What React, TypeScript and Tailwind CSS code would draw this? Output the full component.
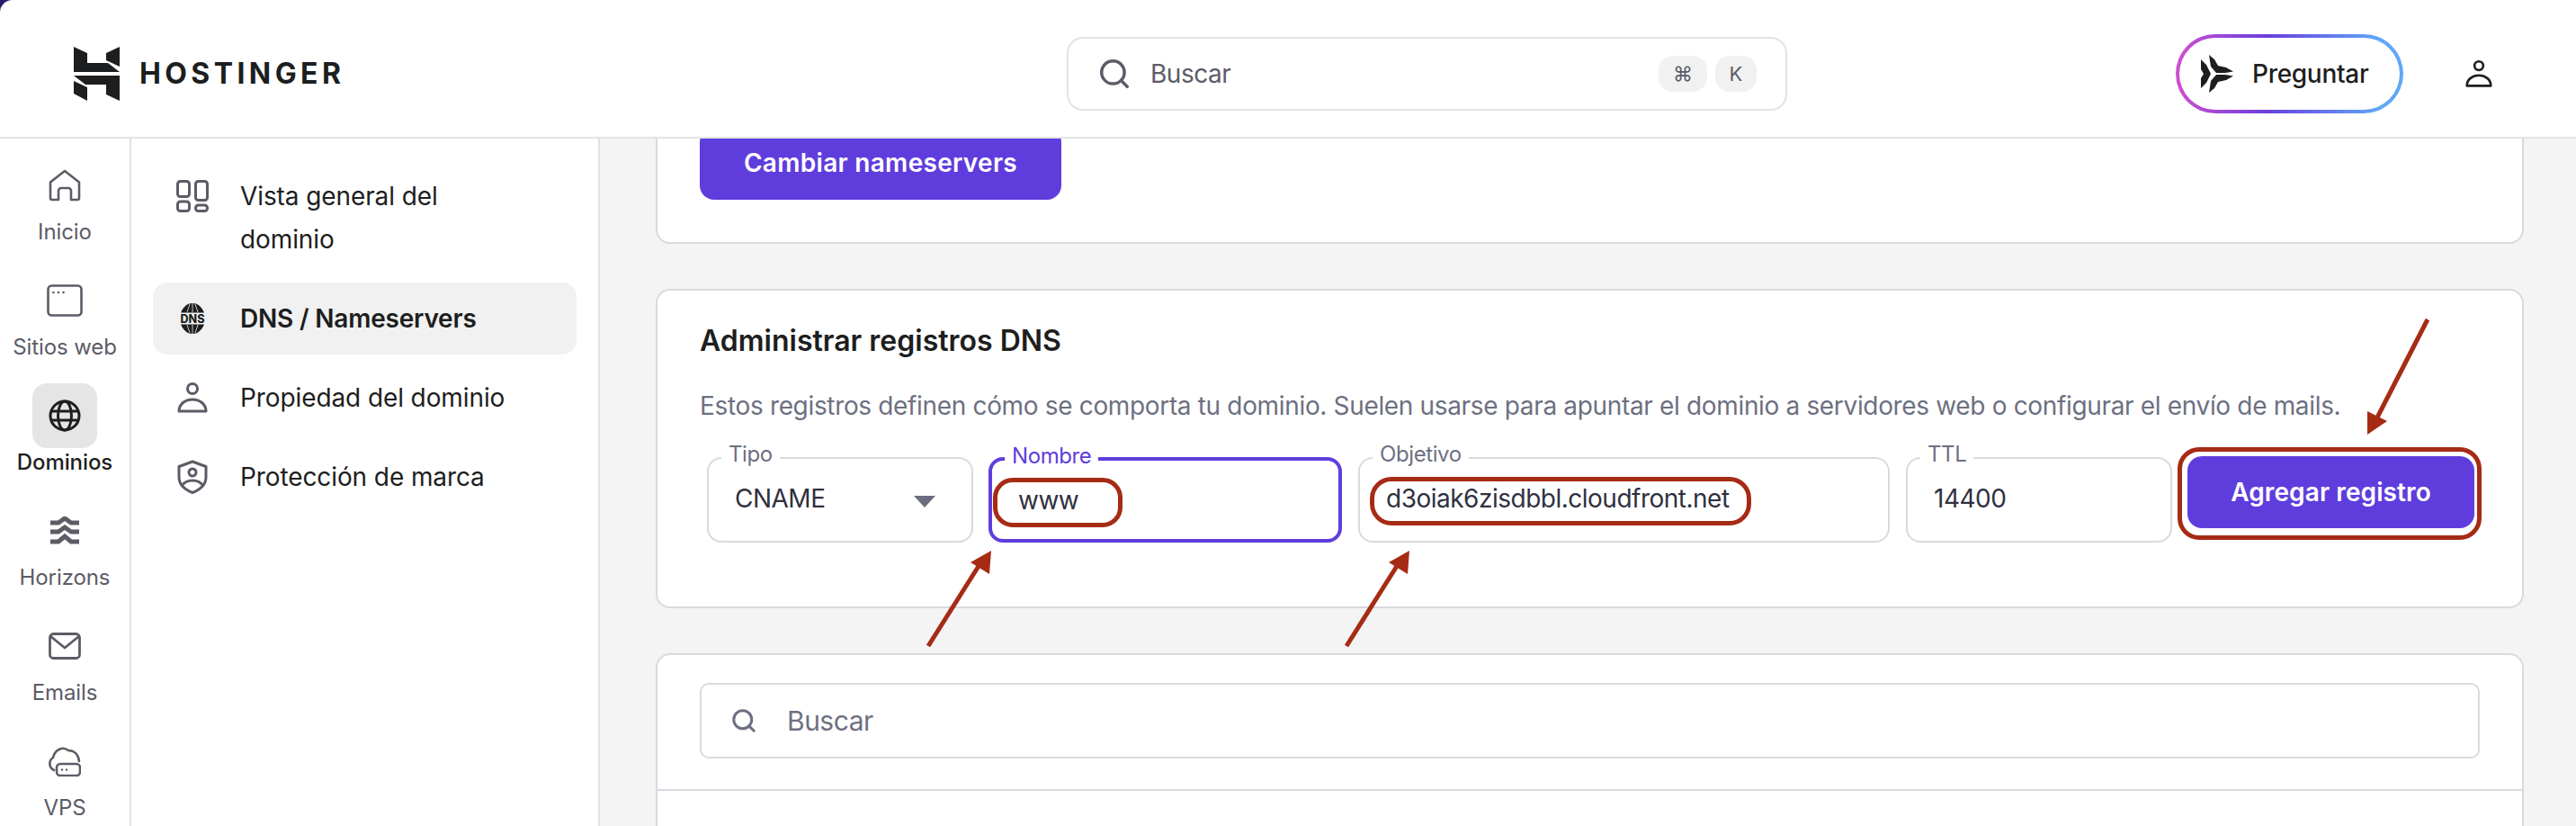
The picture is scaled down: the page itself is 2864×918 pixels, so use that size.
import { Search } from "lucide-react";

const HomeIcon = () => (
  <svg width="36" height="36" viewBox="0 0 36 36" fill="none" stroke="currentColor" strokeWidth="2.6" strokeLinejoin="round">
    <path d="M18 2L34 14.5V32a2 2 0 0 1-2 2h-7V24a3 3 0 0 0-3-3h-8a3 3 0 0 0-3 3v10H4a2 2 0 0 1-2-2V14.5Z" />
  </svg>
);

const WindowIcon = () => (
  <svg width="40" height="36" viewBox="0 0 40 36" fill="none" stroke="currentColor" strokeWidth="2.6">
    <rect x="1.5" y="1.5" width="37" height="33" rx="4" />
    <circle cx="7.5" cy="9" r="1.3" fill="currentColor" stroke="none" />
    <circle cx="13" cy="9" r="1.3" fill="currentColor" stroke="none" />
    <circle cx="18.5" cy="9" r="1.3" fill="currentColor" stroke="none" />
  </svg>
);

const GlobeIcon = () => (
  <svg width="36" height="36" viewBox="0 0 36 36" fill="none" stroke="currentColor" strokeWidth="3">
    <circle cx="18" cy="18" r="16" />
    <ellipse cx="18" cy="18" rx="7.5" ry="16" />
    <path d="M2 13H34M2 23H34" />
  </svg>
);

const HorizonsIcon = () => (
  <svg width="32" height="32" viewBox="0 0 32 32" fill="none" stroke="currentColor" strokeWidth="5">
    <path d="M0 7H9L16 2L23 7H32" />
    <path d="M0 17H9L16 12L23 17H32" />
    <path d="M0 28H9L16 22L23 28H32" />
  </svg>
);

const MailIcon = () => (
  <svg width="36" height="30" viewBox="0 0 36 30" fill="none" stroke="currentColor" strokeWidth="2.8" strokeLinejoin="round">
    <rect x="1.5" y="1.5" width="33" height="27" rx="4" />
    <path d="M2 4L18 17L34 4" />
  </svg>
);

const VpsIcon = () => (
  <svg width="36" height="34" viewBox="0 0 36 34" fill="none" stroke="currentColor" strokeWidth="2.6" strokeLinecap="round">
    <path d="M6 27C0 24 0 16 5 13C7 4 16 0 22 5C28 5 33 9 34 17" />
    <rect x="9" y="20" width="26" height="13" rx="4" />
    <circle cx="15" cy="26.5" r="1.2" fill="currentColor" stroke="none" />
    <circle cx="20" cy="26.5" r="1.2" fill="currentColor" stroke="none" />
  </svg>
);

const OverviewIcon = () => (
  <svg width="36" height="36" viewBox="0 0 36 36" fill="none" stroke="currentColor" strokeWidth="3">
    <rect x="1.5" y="1.5" width="13" height="17" rx="3" />
    <rect x="21.5" y="1.5" width="13" height="21" rx="3" />
    <rect x="1.5" y="24" width="13" height="10.5" rx="3" />
    <rect x="21.5" y="28" width="13" height="6.5" rx="3" />
  </svg>
);

const DnsIcon = () => (
  <svg width="36" height="36" viewBox="0 0 36 36">
    <path d="M5 11.500C8 4 13 1 18 1C23 1 28 4 31 11.500Z" fill="#1d1e20" />
    <path d="M5 24.500C8 32 13 35 18 35C23 35 28 32 31 24.500Z" fill="#1d1e20" />
    <path d="M12 11L15 2M18 11V1M24 11L21 2M12 25L15 34M18 25V35M24 25L21 34" stroke="#f1f1f1" strokeWidth="0.8" />
    <text x="18" y="22.500" textAnchor="middle" fontSize="12.500" fontWeight="800" fill="#1d1e20" fontFamily="Inter, sans-serif">
      DNS
    </text>
  </svg>
);

const UserIcon = ({ size = 36 }: { size?: number }) => (
  <svg width={size} height={size} viewBox="0 0 36 36" fill="none" stroke="currentColor" strokeWidth="3" strokeLinejoin="round">
    <circle cx="18" cy="8" r="5.500" />
    <path d="M3 33C3 25 10 20 18 20C26 20 33 25 33 33Z" />
  </svg>
);

const ShieldIcon = () => (
  <svg width="36" height="38" viewBox="0 0 36 38" fill="none" stroke="currentColor" strokeWidth="3" strokeLinejoin="round">
    <path d="M18 2L33 7.500V19C33 27 27 33 18 36.500C9 33 3 27 3 19V7.500Z" />
    <circle cx="18" cy="14" r="4" />
    <path d="M6 29C9 24.500 13 23 18 23C23 23 27 24.500 30 29" />
  </svg>
);

const LogoMark = () => (
  <svg width="51" height="60" viewBox="0 0 51 60" fill="#1d1e20">
    <path d="M0 0L15 7V18H38L51 28H0Z" />
    <path d="M36 7L51 0V22L36 15Z" />
    <path d="M51 60L36 53V42H13L0 32H51Z" />
    <path d="M0 38L15 45V60L0 52Z" />
  </svg>
);

const SparkIcon = () => (
  <svg width="36" height="42" viewBox="0 0 36 42" fill="#1d1e20">
    <path d="M0 5L6 11L11 21L6 31L0 37V26L3 21L0 16Z" />
    <path d="M9 0L15 5L19 12L28 14L36 18.500L27 20L17 20L11 13Z" />
    <path d="M9 42L15 37L19 30L28 28L36 23.500L27 22L17 22L11 29Z" />
  </svg>
);

const railItems = [
  { label: "Inicio", icon: <HomeIcon /> },
  { label: "Sitios web", icon: <WindowIcon /> },
  { label: "Dominios", icon: <GlobeIcon />, active: true },
  { label: "Horizons", icon: <HorizonsIcon /> },
  { label: "Emails", icon: <MailIcon /> },
  { label: "VPS", icon: <VpsIcon /> },
];

const domainMenu = [
  { label: "Vista general del dominio", icon: <OverviewIcon /> },
  { label: "DNS / Nameservers", icon: <DnsIcon />, active: true },
  { label: "Propiedad del dominio", icon: <UserIcon /> },
  { label: "Protección de marca", icon: <ShieldIcon /> },
];

const Field = ({
  label,
  value,
  className,
  focused,
  children,
}: {
  label: string;
  value: string;
  className: string;
  focused?: boolean;
  children?: React.ReactNode;
}) => (
  <div
    className={`relative h-[95px] shrink-0 rounded-[16px] bg-white ${className} ${
      focused ? "border-[4px] border-[#5f3ddd]" : "border-2 border-[#d8dae0]"
    }`}
  >
    <span
      className={`absolute -top-[21px] left-[14px] bg-white px-[8px] text-[24px] leading-[32px] tracking-[-0.4px] ${
        focused ? "text-[#5f3ddd]" : "text-[#6d7081]"
      }`}
    >
      {label}
    </span>
    <div className="flex h-full items-start pl-[29px] pt-[26px] text-[28px] leading-[36px] tracking-[-0.5px] text-[#2f3140]">
      {value}
    </div>
    {children}
  </div>
);

export default function App() {
  return (
    <div className="relative flex h-[918px] flex-col overflow-hidden bg-[#2a1a6e] [font-family:Inter,sans-serif] text-[#1d1e20]">
      {/* top bar */}
      <header className="z-10 flex h-[154px] shrink-0 items-center rounded-tl-[14px] border-b-2 border-[#e3e3e3] bg-white pl-[82px] pt-[12px]">
        <LogoMark />
        <span className="ml-[22px] w-[222px] text-[32px] font-bold leading-none tracking-[4.4px]">HOSTINGER</span>
        <div className="ml-[809px] flex h-[82px] w-[801px] items-center rounded-[18px] border-2 border-[#e3e3e3] pl-[32px] pr-[32px]">
          <Search size={38} strokeWidth={2.2} className="text-[#5b5c66]" />
          <span className="ml-[21px] text-[28px] tracking-[-0.5px] text-[#5b5c66]">Buscar</span>
          <span className="ml-auto flex h-[40px] w-[54px] items-center justify-center rounded-[16px] bg-[#f1f1f1] text-[22px] text-[#5b5c66]">⌘</span>
          <span className="ml-[9px] flex h-[40px] w-[46px] items-center justify-center rounded-[16px] bg-[#f1f1f1] text-[22px] text-[#5b5c66]">K</span>
        </div>
        <div className="ml-[432px] h-[88px] w-[253px] rounded-full bg-[linear-gradient(90deg,#d04fcf,#6a3fdc_40%,#5fa8f8_90%)] p-[4px]">
          <div className="flex h-full items-center rounded-full bg-white pl-[24px]">
            <SparkIcon />
            <span className="ml-[21px] text-[28px] font-medium tracking-[-0.3px]">Preguntar</span>
          </div>
        </div>
        <div className="ml-[68px]">
          <UserIcon size={32} />
        </div>
      </header>

      <div className="flex min-h-0 flex-1 bg-white">
        {/* icon rail */}
        <nav className="flex w-[146px] shrink-0 flex-col items-center gap-[24px] border-r-2 border-[#e3e3e3] pt-[16px]">
          {railItems.map((item) => (
            <div key={item.label} className="flex w-full shrink-0 flex-col items-center">
              <div
                className={`flex h-[72px] w-[72px] items-center justify-center rounded-[16px] ${
                  item.active ? "bg-[#e5e5e5] text-[#1d1e20]" : "text-[#5b5c66]"
                }`}
              >
                {item.icon}
              </div>
              <span
                className={`h-[32px] whitespace-nowrap text-[24px] leading-[32px] tracking-[-0.1px] ${
                  item.active ? "font-medium text-[#1d1e20]" : "text-[#5b5c66]"
                }`}
              >
                {item.label}
              </span>
            </div>
          ))}
        </nav>

        {/* domain menu */}
        <aside className="flex w-[521px] shrink-0 flex-col gap-[8px] border-r-2 border-[#e3e3e3] px-[24px] pt-[24px]">
          {domainMenu.map((item) => (
            <div
              key={item.label}
              className={`flex items-start gap-[35px] rounded-[16px] py-[16px] pl-[26px] ${item.active ? "bg-[#f1f1f1]" : ""}`}
            >
              <div className="flex h-[48px] w-[36px] shrink-0 items-center justify-center text-[#5b5c66]">{item.icon}</div>
              <span className={`max-w-[300px] text-[28px] leading-[48px] ${item.active ? "font-semibold tracking-[-0.2px]" : "tracking-[-0.1px]"}`}>
                {item.label}
              </span>
            </div>
          ))}
        </aside>

        {/* main content */}
        <main className="min-w-0 flex-1 bg-[#f4f4f5] pl-[62px] pr-[58px]">
          <section className="-mt-[40px] rounded-[16px] border-2 border-[#d8dae0] bg-white pb-[47px] pl-[47px] pt-[26px]">
            <button className="flex h-[80px] w-[402px] items-center justify-center rounded-[16px] bg-[#5f3ddd] pb-[3px] text-[28px] font-semibold tracking-[0.3px] text-white">
              Cambiar nameservers
            </button>
          </section>

          <section className="mt-[50px] h-[355px] rounded-[16px] border-2 border-[#d8dae0] bg-white pl-[47px] pt-[36px]">
            <h2 className="text-[32px] font-semibold leading-[40px] tracking-[0px]">Administrar registros DNS</h2>
            <p className="mt-[32px] whitespace-nowrap text-[28px] leading-[40px] tracking-[-0.34px] text-[#6d7081]">
              Estos registros definen cómo se comporta tu dominio. Suelen usarse para apuntar el dominio a servidores web o configurar el envío de mails.
            </p>
            <div className="ml-[8px] mt-[37px] flex items-start gap-[18px]">
              <Field label="Tipo" value="CNAME" className="w-[296px]">
                <div className="absolute left-[228px] top-[41px] h-0 w-0 border-x-[12px] border-t-[13px] border-x-transparent border-t-[#6d6d80]" />
              </Field>
              <Field label="Nombre" value="www" className="-ml-[1px] w-[393px]" focused>
                <div className="absolute left-[1px] top-[19px] h-[55px] w-[144px] rounded-[22px] border-[5px] border-[#a62b15]" />
              </Field>
              <Field label="Objetivo" value="d3oiak6zisdbbl.cloudfront.net" className="w-[591px]">
                <div className="absolute left-[11px] top-[20px] h-[54px] w-[424px] rounded-[24px] border-[5px] border-[#a62b15]" />
              </Field>
              <Field label="TTL" value="14400" className="w-[296px]" />
              <div className="relative -ml-[1px] shrink-0">
                <button className="-mt-[1px] flex h-[80px] w-[319px] items-center justify-center rounded-[16px] bg-[#5f3ddd] text-[28px] font-semibold tracking-[0.1px] text-white">
                  Agregar registro
                </button>
                <div className="absolute -left-[11px] -top-[11px] h-[103px] w-[338px] rounded-[24px] border-[5px] border-[#a62b15]" />
              </div>
            </div>
          </section>

          <section className="mt-[50px] h-[300px] rounded-t-[16px] border-2 border-[#d8dae0] bg-white pt-[31px]">
            <div className="mx-[47px] flex h-[84px] items-center rounded-[10px] border-2 border-[#d8dae0] pl-[32px]">
              <Search size={30} strokeWidth={2.4} className="text-[#6d7081]" />
              <span className="ml-[33px] text-[30px] tracking-[-0.5px] text-[#6d7081]">Buscar</span>
            </div>
            <div className="mt-[34px] border-t-2 border-[#d8dae0]" />
          </section>
        </main>
      </div>

      {/* hand-drawn annotation arrows */}
      <svg className="pointer-events-none absolute left-0 top-0 z-20" width="2864" height="918" fill="#a62b15" stroke="none">
        <path d="M1032 718L1090 626" stroke="#a62b15" strokeWidth="5" />
        <path d="M1102 612L1079 625L1100 638Z" />
        <path d="M1497 718L1555 626" stroke="#a62b15" strokeWidth="5" />
        <path d="M1567 612L1544 625L1565 638Z" />
        <path d="M2699 355L2643 464" stroke="#a62b15" strokeWidth="5" />
        <path d="M2632 483L2632 457L2654 468Z" />
      </svg>
    </div>
  );
}
